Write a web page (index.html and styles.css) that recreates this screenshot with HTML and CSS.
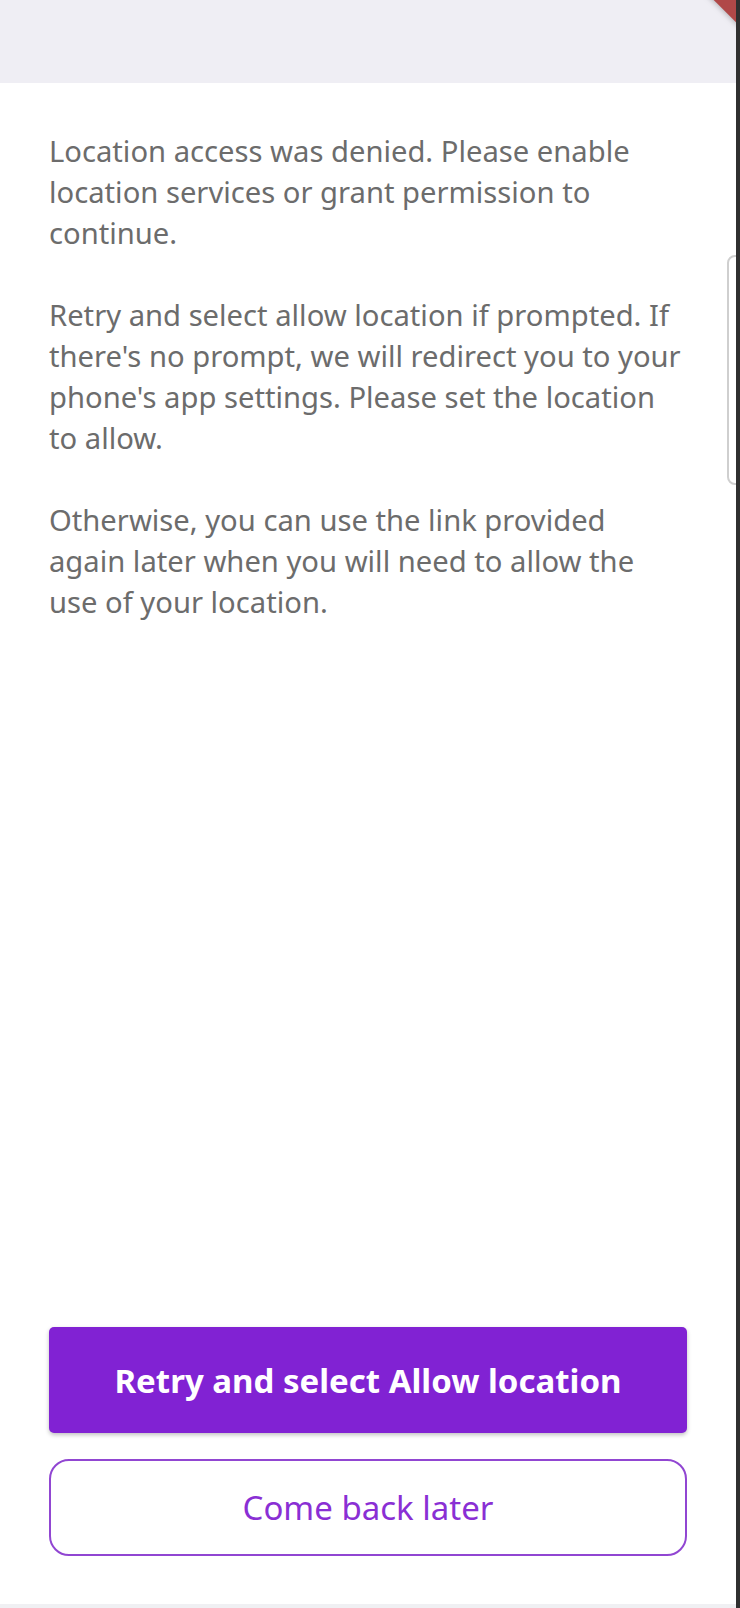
FILE: index.html
```html
<!DOCTYPE html>
<html>
<head>
<meta charset="utf-8">
<link rel="stylesheet" href="styles.css">
</head>
<body>
<div class="screen">
  <div class="main">
    <header class="topbar"></header>
    <section class="content">
      <p class="msg">Location access was denied. Please enable location services or grant permission to continue.</p>
      <p class="msg">Retry and select allow location if prompted. If there's no prompt, we will redirect you to your phone's app settings. Please set the location to allow.</p>
      <p class="msg">Otherwise, you can use the link provided again later when you will need to allow the use of your location.</p>
    </section>
    <div class="actions">
      <button class="btn btn-primary">Retry and select Allow location</button>
      <button class="btn btn-outline">Come back later</button>
    </div>
    <div class="scroll-hint"></div>
    <div class="corner-ribbon"></div>
  </div>
  <div class="edge"></div>
</div>
</body>
</html>
```

FILE: styles.css
```css
html, body {
  margin: 0;
  padding: 0;
  background: #ffffff;
}
.screen {
  width: 740px;
  height: 1608px;
  display: flex;
  overflow: hidden;
}
.main {
  position: relative;
  flex: 1;
  display: flex;
  flex-direction: column;
  background: #ffffff;
  overflow: hidden;
  border-bottom: 4px solid #f0f0f3;
  box-sizing: border-box;
}
.edge {
  width: 4px;
  background: #303030;
}
.topbar {
  height: 83px;
  background: #efeef4;
  flex: none;
}
.content {
  padding: 48px 49px 0 49px;
}
.msg {
  margin: 0 0 41px 0;
  font-family: "Noto Sans", "Open Sans", sans-serif;
  font-size: 29.2px;
  line-height: 41px;
  color: #6c6c6c;
}
.actions {
  margin-top: auto;
  padding: 0 49px 48px 49px;
  display: flex;
  flex-direction: column;
  gap: 26px;
}
.btn {
  font-family: "Noto Sans", "Open Sans", sans-serif;
  width: 100%;
  box-sizing: border-box;
  cursor: pointer;
}
.btn-primary {
  height: 106px;
  background: #8122d3;
  color: #ffffff;
  border: none;
  border-radius: 5px;
  font-size: 33px;
  font-weight: 700;
  box-shadow: 0 2px 4px rgba(0, 0, 0, 0.25);
}
.btn-outline {
  height: 97px;
  background: #ffffff;
  color: #8a2fd4;
  border: 2px solid #9146d2;
  border-radius: 20px;
  font-size: 33px;
  font-weight: 400;
}
.scroll-hint {
  position: absolute;
  left: 727px;
  top: 255px;
  width: 16px;
  height: 230px;
  border: 2px solid #cfcfcf;
  border-radius: 8px;
  box-sizing: border-box;
}
.corner-ribbon {
  position: absolute;
  right: -30px;
  top: -26px;
  width: 60px;
  height: 40px;
  background: #b04848;
  transform: rotate(45deg);
  box-shadow: 0 0 6px rgba(0, 0, 0, 0.35);
}
```
